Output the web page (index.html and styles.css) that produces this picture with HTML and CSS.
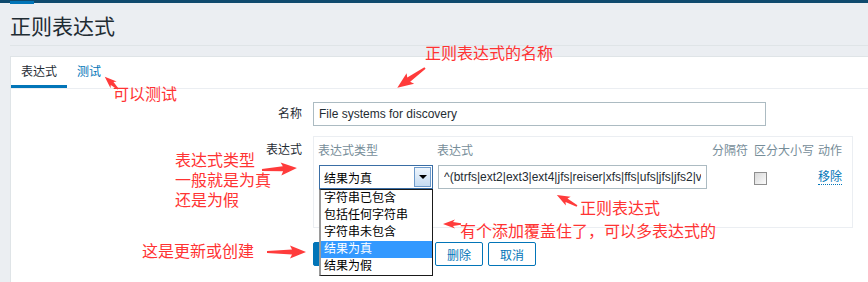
FILE: index.html
```html
<!DOCTYPE html>
<html lang="zh-CN">
<head>
    <meta charset="UTF-8">
    <title>正则表达式</title>
    <link rel="stylesheet" href="styles.css">
</head>
<body>
    <div class="topbar"></div>
    <div class="header">
        <h1>正则表达式</h1>
    </div>

    <div class="container">
        <ul class="tabs">
            <li class="tab active">表达式</li>
            <li class="tab"><a href="#">测试</a></li>
        </ul>

        <form class="form">
            <div class="form-row">
                <label class="form-label" for="name">名称</label>
                <input class="input name-input" id="name" type="text" value="File systems for discovery">
            </div>

            <div class="form-row">
                <span class="form-label label-top">表达式</span>
                <div class="expr-box">
                    <div class="expr-grid">
                        <span class="th">表达式类型</span>
                        <span class="th">表达式</span>
                        <span class="th">分隔符</span>
                        <span class="th">区分大小写</span>
                        <span class="th">动作</span>

                        <div class="select-wrap">
                            <div class="select">
                                <span class="select-value">结果为真</span>
                                <span class="select-btn"><i class="caret"></i></span>
                            </div>
                            <!-- liste ouverte du select -->
                            <ul class="select-list">
                                <li>字符串已包含</li>
                                <li>包括任何字符串</li>
                                <li>字符串未包含</li>
                                <li class="selected">结果为真</li>
                                <li>结果为假</li>
                            </ul>
                        </div>
                        <input class="input expr-input" type="text" value="^(btrfs|ext2|ext3|ext4|jfs|reiser|xfs|ffs|ufs|jfs|jfs2|vxfs|hfs|refs|ntfs|fat32|zfs)$">
                        <span></span>
                        <span class="checkbox"></span>
                        <a class="link" href="#">移除</a>
                    </div>
                </div>
            </div>

            <div class="form-row">
                <span></span>
                <div class="buttons">
                    <!-- boutons caches sous la liste -->
                    <button type="button" class="btn primary wide" title="更新"></button>
                    <button type="button" class="btn alt wide" title="克隆"></button>
                    <button type="button" class="btn alt">删除</button>
                    <button type="button" class="btn alt">取消</button>
                </div>
            </div>
        </form>
    </div>

    <!-- annotations rouges -->
    <div class="notes">
        <span class="note" style="left:113px; top:85px;">可以测试</span>
        <span class="note" style="left:425px; top:44px;">正则表达式的名称</span>
        <div class="note stack" style="left:175px; top:149px;">
            <span>表达式类型</span>
            <span>一般就是为真</span>
            <span>还是为假</span>
        </div>
        <span class="note" style="left:142px; top:242px;">这是更新或创建</span>
        <span class="note" style="left:580px; top:199px;">正则表达式</span>
        <span class="note" style="left:460px; top:222px;">有个添加覆盖住了，可以多表达式的</span>

        <svg class="arrows" width="868" height="282" viewBox="0 0 868 282">
            <g fill="#ff3b3b">
                <polygon transform="translate(118,89) rotate(222.7)" points="0,-0.8 8,-2 6,-4.5 18,0 6,4.5 8,2 0,0.8"/>
                <polygon transform="translate(425,68) rotate(144.5)" points="0,-1 20,-2.5 18,-6.5 34,0 18,6.5 20,2.5 0,1"/>
                <polygon transform="translate(262,170) rotate(-3.3)" points="0,-1 21,-2.5 19,-6.5 35,0 19,6.5 21,2.5 0,1"/>
                <polygon transform="translate(267,252)" points="0,-1 25,-2.5 23,-6.5 39,0 23,6.5 25,2.5 0,1"/>
                <polygon transform="translate(577,206) rotate(208.8)" points="0,-0.8 12,-2 10,-5 23,0 10,5 12,2 0,0.8"/>
                <polygon transform="translate(461,224) rotate(180)" points="0,-0.8 8,-2 6,-4.5 18,0 6,4.5 8,2 0,0.8"/>
            </g>
        </svg>
    </div>
</body>
</html>
```

FILE: styles.css
```css
a {
    text-decoration: none;
}

body {
    font-family: 'Liberation Sans', 'Noto Sans CJK SC', sans-serif;
    font-size: 12px;
    color: #1f2c33;
    background-color: #ebeef2;
    margin: 0;
    padding: 0;
    height: 282px;
    overflow: hidden;
    position: relative;
}

.topbar {
    height: 3px;
    background-color: #0f4a6e;
    position: relative;
}
.topbar::after {
    content: "";
    position: absolute;
    left: 10px;
    top: 1px;
    width: 24px;
    height: 3px;
    background-color: #0275b8;
}

.header {
    margin: 0 0 0 10px;
    padding: 10px 0 4px 0;
    border-bottom: 1px solid #dfe4e7;
}
h1 {
    margin: 0;
    font-size: 21px;
    line-height: 28px;
    font-weight: normal;
    color: #1f2c33;
}

.container {
    margin: 10px 0 0 10px;
    background-color: white;
    border-left: 1px solid #dfe4e7;
    border-top: 1px solid #dfe4e7;
    height: 225px;
}

/* onglets */
.tabs {
    display: flex;
    list-style: none;
    margin: 0;
    padding: 0;
    border-bottom: 1px solid #ebeef2;
}
.tab {
    padding: 8px 10px 6px 10px;
    line-height: 14px;
    border-bottom: 3px solid transparent;
}
.tab.active {
    border-bottom-color: #0275b8;
}
.tab a {
    color: #0275b8;
}

/* formulaire */
.form {
    padding-top: 13px;
}
.form-row {
    display: grid;
    grid-template-columns: 291px 1fr;
    column-gap: 11px;
    align-items: start;
    margin-bottom: 10px;
}
.form-label {
    text-align: right;
    line-height: 24px;
}
.label-top {
    line-height: 14px;
    padding-top: 7px;
}
.input {
    box-sizing: border-box;
    height: 24px;
    border: 1px solid #acbbc2;
    padding: 0 5px;
    font-family: 'Liberation Sans', 'Noto Sans CJK SC', sans-serif;
    font-size: 12px;
    color: #1f2c33;
    background-color: white;
}
.name-input {
    width: 453px;
}

.expr-box {
    box-sizing: border-box;
    width: 540px;
    height: 92px;
    border: 1px solid #ebeef2;
    padding: 6px 4px 0 4px;
}
.expr-grid {
    display: grid;
    grid-template-columns: 119px 275px 42px 64px auto;
    row-gap: 6px;
    align-items: center;
}
.th {
    color: #768d99;
    line-height: 16px;
}

.select-wrap {
    position: relative;
    margin-left: 1px;
    width: 114px;
    z-index: 2;
}
.select {
    box-sizing: border-box;
    height: 24px;
    display: flex;
    align-items: center;
    border: 1px solid #3a6ea5;
    background-color: white;
    padding: 1px;
}
.select-value {
    flex: 1;
    padding-left: 3px;
    color: #000;
}
.select-btn {
    box-sizing: border-box;
    width: 17px;
    height: 20px;
    border: 1px solid #6d9acb;
    background: linear-gradient(#eef5fc, #c6dcf2);
    display: flex;
    align-items: center;
    justify-content: center;
}
.caret {
    width: 0;
    height: 0;
    border-left: 4px solid transparent;
    border-right: 4px solid transparent;
    border-top: 4px solid #000;
}
.select-list {
    position: absolute;
    left: 0;
    top: 24px;
    width: 114px;
    box-sizing: border-box;
    margin: 0;
    padding: 0;
    list-style: none;
    background-color: white;
    border: 1px solid #1a1a1a;
    border-left: 2px solid #9a9a9a;
}
.select-list li {
    height: 17px;
    line-height: 17px;
    padding-left: 3px;
    color: #000;
    white-space: nowrap;
}
.select-list li.selected {
    background-color: #3399ff;
    color: white;
}

.expr-input {
    margin-left: 1px;
    width: 269px;
}
.checkbox {
    box-sizing: border-box;
    width: 13px;
    height: 13px;
    border: 1px solid #8f8f8f;
    background: linear-gradient(135deg, #d8d8d8, #fbfbfb);
    margin-top: 2px;
}
.link {
    justify-self: start;
    color: #0275b8;
    line-height: 14px;
    border-bottom: 1px dotted #0275b8;
    margin-top: 1px;
}

/* boutons */
.buttons {
    display: flex;
    gap: 5px;
    margin-top: 4px;
}
.btn {
    height: 24px;
    padding: 0 11px;
    border: 1px solid #0275b8;
    border-radius: 2px;
    font-family: 'Liberation Sans', 'Noto Sans CJK SC', sans-serif;
    font-size: 12px;
    cursor: pointer;
}
.btn.primary {
    background-color: #0275b8;
    color: white;
}
.btn.alt {
    background-color: white;
    color: #0275b8;
}
.btn.wide {
    width: 56px;
}

/* annotations */
.notes {
    position: absolute;
    left: 0;
    top: 0;
    width: 868px;
    height: 282px;
    pointer-events: none;
    z-index: 5;
}
.note {
    position: absolute;
    font-family: 'Noto Sans CJK SC', sans-serif;
    font-size: 16px;
    line-height: 16px;
    color: #ff3333;
    white-space: nowrap;
}
.note.stack {
    display: flex;
    flex-direction: column;
    line-height: 20px;
}
.arrows {
    position: absolute;
    left: 0;
    top: 0;
}
```
